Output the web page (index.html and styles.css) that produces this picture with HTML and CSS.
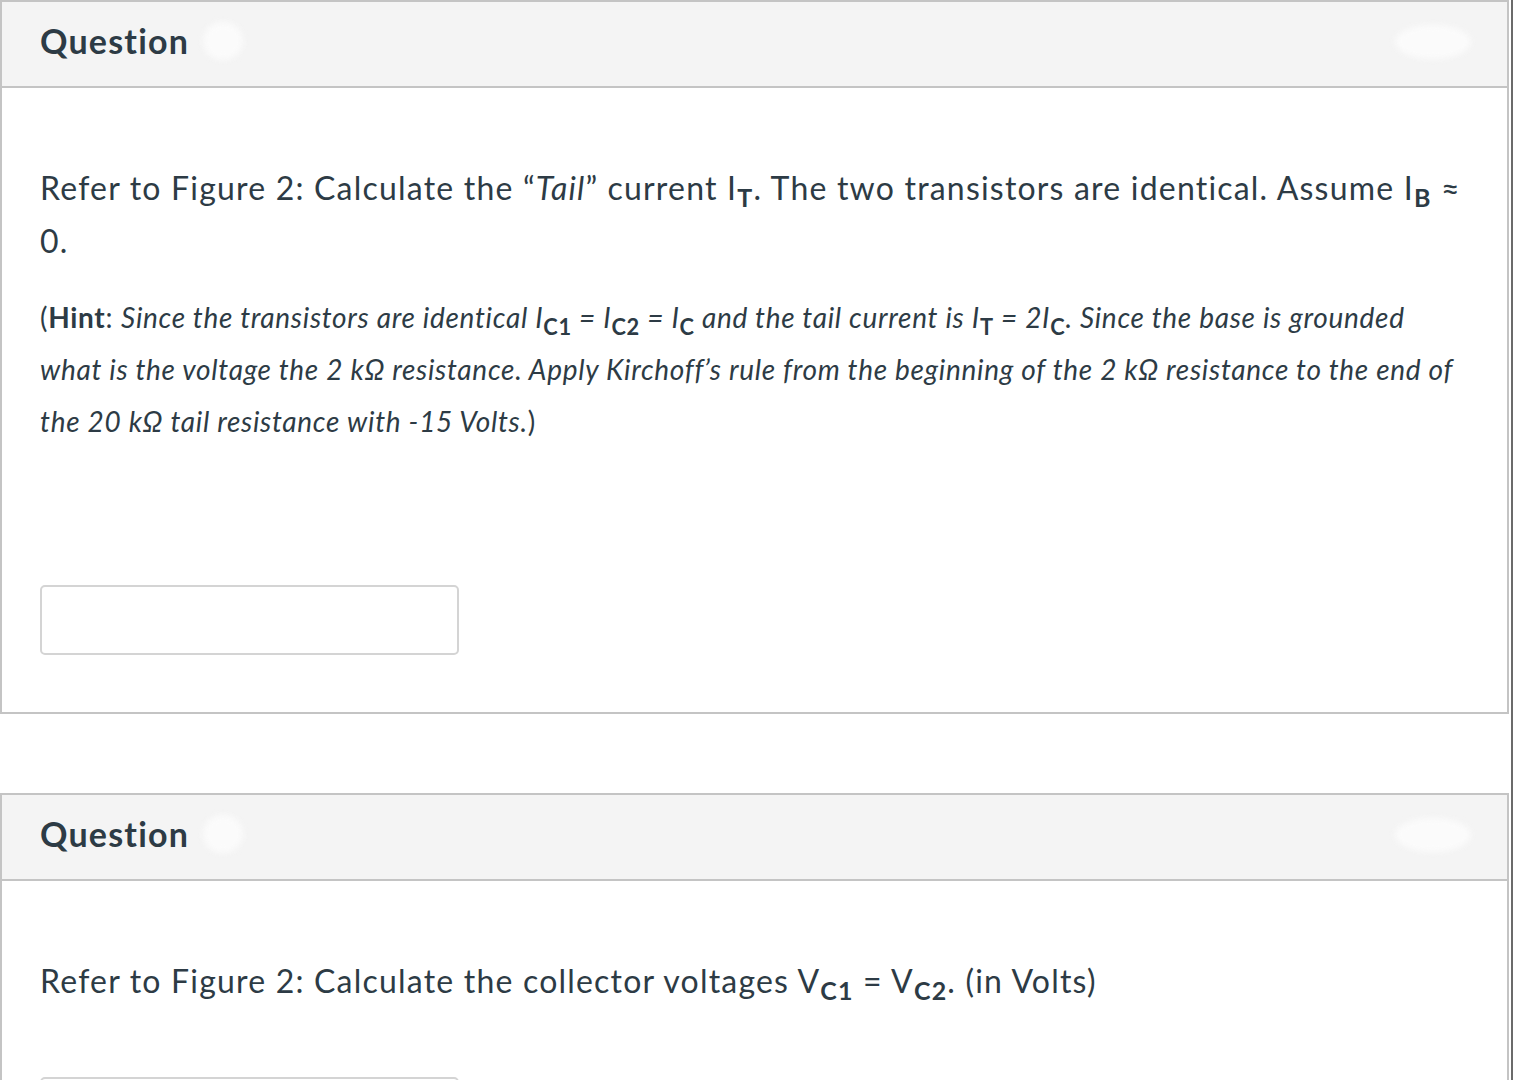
FILE: index.html
```html
<!DOCTYPE html>
<html lang="en">

<head>
  <meta charset="UTF-8">
  <meta name="viewport" content="width=device-width, initial-scale=1.0">
  <title>Quiz</title>
  <link rel="stylesheet" href="styles.css">
</head>

<body>
  <div class="page">

    <!-- question 1 -->
    <div class="question">
      <div class="question-header">
        <span class="question-title">Question</span>
        <span class="smudge smudge-name"></span>
        <span class="smudge smudge-points"></span>
      </div>
      <div class="question-body">
        <p class="question-text">Refer to Figure 2: Calculate the “<em>Tail</em>” current I<sub>T</sub>. The two transistors are identical. Assume I<sub>B</sub> ≈ 0.</p>
        <p class="hint">(<b>Hint</b>: <em>Since the transistors are identical I<sub>C1</sub> = I<sub>C2</sub> = I<sub>C</sub> and the tail current is I<sub>T</sub> = 2I<sub>C</sub>. Since the base is grounded what is the voltage the 2 kΩ resistance. Apply Kirchoff’s rule from the beginning of the 2 kΩ resistance to the end of the 20 kΩ tail resistance with -15 Volts.</em>)</p>
        <input class="answer" type="text">
      </div>
    </div>

    <!-- question 2 -->
    <div class="question">
      <div class="question-header">
        <span class="question-title">Question</span>
        <span class="smudge smudge-name"></span>
        <span class="smudge smudge-points"></span>
      </div>
      <div class="question-body">
        <p class="question-text">Refer to Figure 2: Calculate the collector voltages V<sub>C1</sub> = V<sub>C2</sub>. (in Volts)</p>
        <input class="answer answer-close" type="text">
      </div>
    </div>

  </div>
</body>

</html>
```

FILE: styles.css
```css
/* page */
body {
  margin: 0;
  background-color: #ffffff;
  font-family: Lato, "Open Sans", sans-serif;
  color: #2d3b45;
}

.page {
  min-height: 100vh;
  border-right: 2px solid #6b6b6b;
  padding-right: 2px;
}

/* question card */
.question {
  border: 2px solid #c4c4c4;
  margin-bottom: 79px;
  background-color: white;
}

.question-header {
  height: 84px;
  display: flex;
  align-items: center;
  padding: 0 38px;
  background-color: #f4f4f4;
  border-bottom: 2px solid #c4c4c4;
}

.question-title {
  margin-top: -8px;
  font-size: 34px;
  font-weight: 700;
  letter-spacing: 1.2px;
}

/* blurred-out points */
.smudge {
  display: inline-block;
  background-color: #fbfbfb;
  border-radius: 50%;
  filter: blur(3px);
}

.smudge-name {
  width: 40px;
  height: 38px;
  margin-left: 14px;
  margin-top: -6px;
}

.smudge-points {
  width: 76px;
  height: 34px;
  margin-left: auto;
  margin-right: -2px;
  margin-top: -4px;
}

/* body */
.question-body {
  padding: 73px 43px 57px 38px;
}

.question-text {
  margin: 0;
  font-size: 32px;
  line-height: 53px;
  letter-spacing: 1.2px;
}

.hint {
  margin: 24px 0 0;
  font-size: 28px;
  line-height: 52px;
  letter-spacing: 0.7px;
}

sub {
  font-size: 0.78em;
  font-weight: 700;
  font-style: normal;
  line-height: 0;
  vertical-align: -0.3em;
}

.answer {
  display: block;
  margin-top: 138px;
  width: 419px;
  height: 70px;
  box-sizing: border-box;
  border: 2px solid #d4d4d4;
  border-radius: 5px;
  background-color: white;
}

.answer-close {
  margin-top: 70px;
}
```
